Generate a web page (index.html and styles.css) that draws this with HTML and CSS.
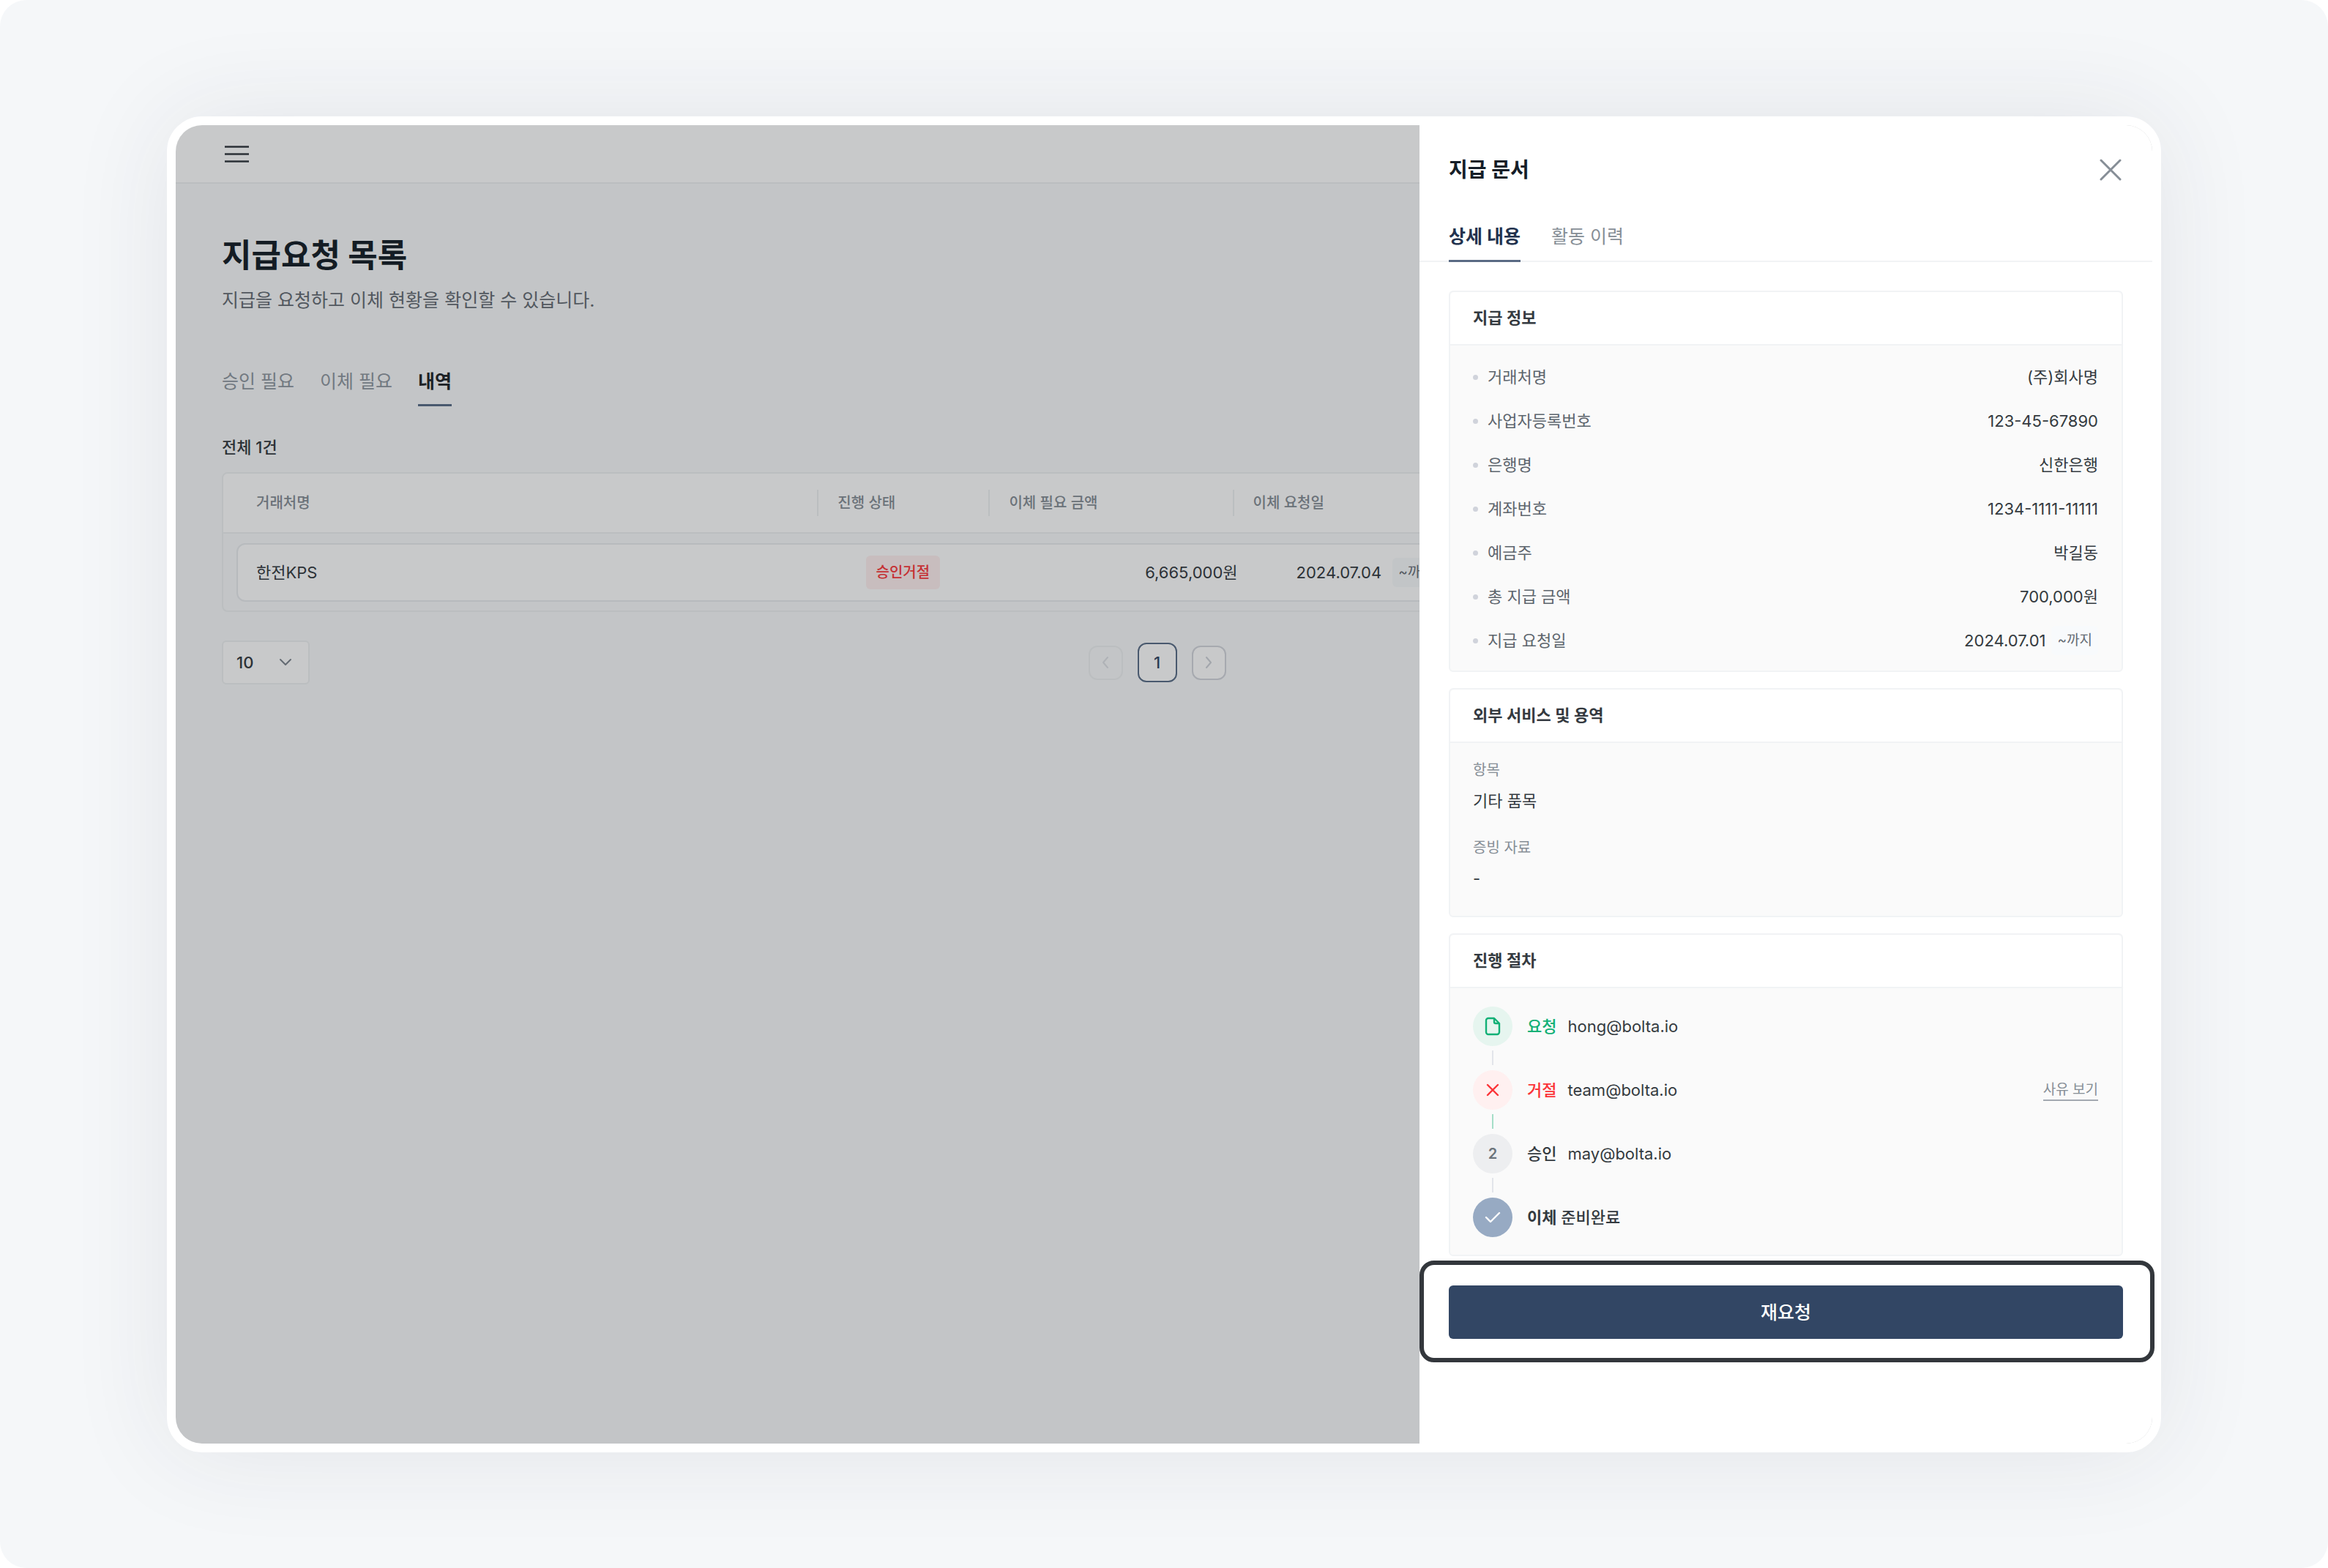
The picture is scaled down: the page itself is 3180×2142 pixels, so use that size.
FILE: index.html
```html
<!DOCTYPE html>
<html lang="ko">
<head>
    <meta charset="UTF-8">
    <meta name="viewport" content="width=device-width, initial-scale=1.0">
    <title>지급요청 목록</title>
    <link rel="stylesheet" href="styles.css">
</head>
<body>
    <div class="stage">
        <div class="window">
            <div class="app">
                <header class="topbar">
                    <button class="icon-button" type="button" aria-label="메뉴">
                        <svg width="33" height="24" viewBox="0 0 33 24" fill="none" stroke="#343a40" stroke-width="2.6">
                            <path d="M0 2.5h33M0 12.5h33M0 22.5h33"/>
                        </svg>
                    </button>
                </header>

                <main class="content">
                    <h1 class="page-title">지급요청 목록</h1>
                    <p class="page-desc">지급을 요청하고 이체 현황을 확인할 수 있습니다.</p>

                    <nav class="tabs">
                        <a class="tab" href="#approve">승인 필요</a>
                        <a class="tab" href="#transfer">이체 필요</a>
                        <a class="tab active" href="#history">내역</a>
                    </nav>

                    <p class="count">전체 1건</p>

                    <table class="list">
                        <thead>
                            <tr>
                                <th>거래처명</th>
                                <th>진행 상태</th>
                                <th>이체 필요 금액</th>
                                <th>이체 요청일</th>
                            </tr>
                        </thead>
                        <tbody>
                            <tr>
                                <td>한전KPS</td>
                                <td class="cell-status"><span class="badge-reject">승인거절</span></td>
                                <td class="cell-amount">6,665,000원</td>
                                <td class="cell-date">2024.07.04 <span class="until">~까지</span></td>
                            </tr>
                        </tbody>
                    </table>

                    <div class="list-footer">
                        <div class="page-size">
                            <select class="page-size-select" aria-label="페이지당 개수">
                                <option>10</option>
                            </select>
                            <svg class="page-size-arrow" width="18" height="12" viewBox="0 0 18 12" fill="none" stroke="#7d858e" stroke-width="2" stroke-linecap="round" stroke-linejoin="round">
                                <path d="M2 2l7 7 7-7"/>
                            </svg>
                        </div>
                        <div class="pagination">
                            <button class="page-arrow disabled" type="button" aria-label="이전" disabled>
                                <svg width="12" height="18" viewBox="0 0 12 18" fill="none" stroke="currentColor" stroke-width="2" stroke-linecap="round" stroke-linejoin="round">
                                    <path d="M9 2L3 9l6 7"/>
                                </svg>
                            </button>
                            <button class="page-number" type="button">1</button>
                            <button class="page-arrow" type="button" aria-label="다음">
                                <svg width="12" height="18" viewBox="0 0 12 18" fill="none" stroke="currentColor" stroke-width="2" stroke-linecap="round" stroke-linejoin="round">
                                    <path d="M3 2l6 7-6 7"/>
                                </svg>
                            </button>
                        </div>
                    </div>
                </main>
            </div>

            <div class="dim"></div>

            <aside class="drawer">
                <div class="drawer-header">
                    <h2 class="drawer-title">지급 문서</h2>
                    <button class="icon-button" type="button" aria-label="닫기">
                        <svg width="32" height="32" viewBox="0 0 32 32" fill="none" stroke="#868e96" stroke-width="3" stroke-linecap="round">
                            <path d="M2 3l26 26M28 3L2 29"/>
                        </svg>
                    </button>
                </div>

                <nav class="drawer-tabs">
                    <a class="drawer-tab active" href="#detail">상세 내용</a>
                    <a class="drawer-tab" href="#activity">활동 이력</a>
                </nav>

                <div class="drawer-body">
                    <section class="card">
                        <h3 class="card-title">지급 정보</h3>
                        <dl class="info">
                            <div class="info-row"><dt>거래처명</dt><dd>(주)회사명</dd></div>
                            <div class="info-row"><dt>사업자등록번호</dt><dd>123-45-67890</dd></div>
                            <div class="info-row"><dt>은행명</dt><dd>신한은행</dd></div>
                            <div class="info-row"><dt>계좌번호</dt><dd>1234-1111-11111</dd></div>
                            <div class="info-row"><dt>예금주</dt><dd>박길동</dd></div>
                            <div class="info-row"><dt>총 지급 금액</dt><dd>700,000원</dd></div>
                            <div class="info-row"><dt>지급 요청일</dt><dd>2024.07.01 <span class="until">~까지</span></dd></div>
                        </dl>
                    </section>

                    <section class="card">
                        <h3 class="card-title">외부 서비스 및 용역</h3>
                        <dl class="items">
                            <div class="item"><dt>항목</dt><dd>기타 품목</dd></div>
                            <div class="item"><dt>증빙 자료</dt><dd>-</dd></div>
                        </dl>
                    </section>

                    <section class="card">
                        <h3 class="card-title">진행 절차</h3>
                        <ol class="steps">
                            <li class="step">
                                <span class="step-icon green">
                                    <svg width="22" height="26" viewBox="0 0 22 26" fill="none" stroke="#12b076" stroke-width="2.4" stroke-linejoin="round">
                                        <path d="M5 2h8l7 7v12a3 3 0 0 1-3 3H5a3 3 0 0 1-3-3V5a3 3 0 0 1 3-3z"/>
                                        <path d="M13 2v5a2 2 0 0 0 2 2h5"/>
                                    </svg>
                                </span>
                                <span class="step-label green">요청</span>
                                <span class="step-user">hong@bolta.io</span>
                            </li>
                            <li class="step-line"></li>
                            <li class="step">
                                <span class="step-icon red">
                                    <svg width="20" height="20" viewBox="0 0 20 20" fill="none" stroke="#fb3438" stroke-width="2.4" stroke-linecap="round">
                                        <path d="M3 3l14 14M17 3L3 17"/>
                                    </svg>
                                </span>
                                <span class="step-label red">거절</span>
                                <span class="step-user">team@bolta.io</span>
                                <a class="step-reason" href="#reason">사유 보기</a>
                            </li>
                            <li class="step-line passed"></li>
                            <li class="step">
                                <span class="step-icon">2</span>
                                <span class="step-label">승인</span>
                                <span class="step-user">may@bolta.io</span>
                            </li>
                            <li class="step-line"></li>
                            <li class="step">
                                <span class="step-icon blue">
                                    <svg width="22" height="18" viewBox="0 0 22 18" fill="none" stroke="#fff" stroke-width="2.4" stroke-linecap="round" stroke-linejoin="round">
                                        <path d="M2 9l6 6L20 3"/>
                                    </svg>
                                </span>
                                <span class="step-label"><strong>이체</strong> 준비완료</span>
                            </li>
                        </ol>
                    </section>
                </div>

                <div class="drawer-footer">
                    <button class="submit" type="button">재요청</button>
                </div>
            </aside>
        </div>
    </div>
</body>
</html>
```
FILE: styles.css
```css
* {
    box-sizing: border-box;
    margin: 0;
    padding: 0;
}
body {
    background-color: #fff;
    color: #343a40;
    font-family: Inter, "Noto Sans CJK KR", sans-serif;
    font-size: 22px;
    line-height: 30px;
}
button, select {
    font: inherit;
    color: inherit;
    cursor: pointer;
}
a {
    color: inherit;
    text-decoration: none;
}
ol, ul {
    list-style: none;
}
svg {
    display: block;
}

.stage {
    display: flex;
    min-height: 100vh;
    padding: 159px 228px 158px;
    background-color: #f5f7f9;
    border-radius: 36px;
}
/* main screen, dim layer and drawer share one grid cell */
.window {
    flex: 1;
    display: grid;
    grid-template-columns: minmax(0, 1fr);
    border: 12px solid #fff;
    border-radius: 48px;
    background-color: #fff;
    box-shadow: 0 0 140px rgba(40, 45, 70, 0.09);
}
.app, .dim, .drawer {
    grid-area: 1 / 1;
}
.dim {
    z-index: 1;
    background-color: rgba(17, 22, 26, 0.23);
    border-radius: 36px;
}
.icon-button {
    display: flex;
    border: none;
    background: none;
}

/* list screen */
.app {
    background-color: #f9fafb;
    border-radius: 36px;
    overflow: hidden;
}
.topbar {
    display: flex;
    align-items: center;
    height: 80px;
    padding: 0 67px;
    background-color: #fff;
    border-bottom: 2px solid #eef1f2;
}
.content {
    padding: 66px 82px 0 63px;
}
.page-title {
    font-size: 44px;
    line-height: 64px;
    font-weight: 700;
    color: #151e28;
}
.page-desc {
    margin-top: 13px;
    font-size: 25px;
    line-height: 32px;
    color: #666c74;
}
.tabs {
    display: flex;
    gap: 35px;
    margin-top: 77px;
}
.tab {
    padding-bottom: 13px;
    border-bottom: 3px solid transparent;
    font-size: 25px;
    line-height: 36px;
    color: #8f98a1;
}
.tab.active {
    border-color: #5a6e88;
    color: #212529;
    font-weight: 700;
}
.count {
    margin-top: 41px;
    font-weight: 500;
}
.list {
    display: block;
    margin-top: 19px;
    border: 2px solid #eef1f2;
    border-radius: 8px;
}
.list thead, .list tbody {
    display: block;
}
.list thead {
    background-color: #fff;
    border-bottom: 2px solid #eef1f2;
    border-radius: 6px 6px 0 0;
}
.list tbody {
    padding: 13px 18px 12px;
}
.list tr {
    display: grid;
    align-items: center;
    height: 80px;
}
.list thead tr {
    grid-template-columns: 811fr 234fr 333fr 1172fr;
}
.list tbody tr {
    grid-template-columns: 791fr 234fr 366fr 1119fr;
    background-color: #fff;
    border: 2px solid #e9ecef;
    border-radius: 12px;
}
.list th {
    padding-left: 26px;
    border-left: 2px solid #eef1f2;
    font-size: 20px;
    line-height: 36px;
    font-weight: 500;
    text-align: left;
    color: #868e96;
}
.list th:first-child {
    padding-left: 45px;
    border-left: none;
}
.list td {
    padding-left: 25px;
}
.list .cell-status {
    padding-left: 0;
    text-align: center;
}
.list .cell-amount {
    padding-right: 26px;
    text-align: right;
}
.list .cell-date {
    display: flex;
    align-items: center;
    gap: 15px;
    padding-left: 54px;
}
.badge-reject {
    display: inline-block;
    padding: 8px 14px;
    border-radius: 6px;
    background-color: #fff0f0;
    font-size: 20px;
    font-weight: 500;
    color: #fb3a3d;
}
.until {
    padding: 5px 8px;
    border-radius: 6px;
    background-color: #f8fafc;
    font-size: 19px;
    color: #666c74;
}
.list-footer {
    display: grid;
    grid-template-columns: 1fr auto 1fr;
    align-items: center;
    margin-top: 39px;
}
.page-size {
    position: relative;
    justify-self: start;
}
.page-size-select {
    width: 120px;
    height: 60px;
    padding: 0 18px;
    border: 2px solid #eef1f2;
    border-radius: 6px;
    background-color: #fff;
    font-weight: 500;
    appearance: none;
}
.page-size-arrow {
    position: absolute;
    top: 24px;
    right: 24px;
    pointer-events: none;
}
.pagination {
    display: flex;
    align-items: center;
    gap: 20px;
}
.page-arrow, .page-number {
    display: flex;
    align-items: center;
    justify-content: center;
    border-radius: 12px;
    background-color: #fff;
}
.page-arrow {
    width: 47px;
    height: 47px;
    border: 2px solid #d3d6dc;
    color: #ced2d8;
}
.page-arrow.disabled {
    border-color: #eef1f2;
    background: none;
    color: #dfe2e6;
}
.page-number {
    width: 54px;
    height: 54px;
    border: 2px solid #5a6e88;
    font-weight: 500;
    color: #324664;
}

/* drawer */
.drawer {
    z-index: 2;
    justify-self: end;
    width: 1001px;
    background-color: #fff;
    border-radius: 0 36px 36px 0;
}
.drawer-header {
    display: flex;
    align-items: center;
    justify-content: space-between;
    padding: 40px 40px 0;
}
.drawer-title {
    font-size: 28px;
    line-height: 42px;
    font-weight: 700;
    color: #151e28;
}
.drawer-tabs {
    display: flex;
    gap: 42px;
    margin-top: 52px;
    padding: 0 40px;
    border-bottom: 2px solid #f1f3f5;
}
.drawer-tab {
    margin-bottom: -2px;
    padding-bottom: 14px;
    border-bottom: 3px solid transparent;
    font-size: 25px;
    line-height: 36px;
    color: #868e96;
}
.drawer-tab.active {
    border-color: #5a6a84;
    color: #22324e;
    font-weight: 700;
}
.drawer-body {
    display: flex;
    flex-direction: column;
    gap: 22px;
    padding: 39px 40px 6px;
}
.card {
    border: 2px solid #f1f3f5;
    border-radius: 6px;
    background-color: #fafafa;
}
.card-title {
    padding: 20px 31px 21px;
    border-bottom: 2px solid #f1f3f5;
    border-radius: 6px 6px 0 0;
    background-color: #fff;
    font-size: 22px;
    font-weight: 600;
    color: #343a40;
}
.info {
    display: flex;
    flex-direction: column;
    gap: 30px;
    padding: 28px 32px 26px 31px;
}
.info-row {
    display: flex;
    align-items: center;
    justify-content: space-between;
    height: 30px;
}
.info-row dt {
    display: flex;
    align-items: center;
    gap: 13px;
    color: #5d656d;
}
.info-row dt::before {
    content: "";
    width: 7px;
    height: 7px;
    border-radius: 50%;
    background-color: #d0d3db;
}
.info-row dd {
    display: flex;
    align-items: center;
    gap: 8px;
}
.items {
    display: flex;
    flex-direction: column;
    gap: 34px;
    padding: 22px 31px 36px;
}
.item dt {
    margin-bottom: 12px;
    font-size: 20px;
    color: #868e96;
}
.steps {
    padding: 25px 32px 24px 31px;
}
.step {
    display: flex;
    align-items: center;
}
.step-icon {
    display: flex;
    align-items: center;
    justify-content: center;
    width: 54px;
    height: 54px;
    margin-right: 20px;
    border-radius: 50%;
    background-color: #edeef0;
    font-size: 20px;
    font-weight: 600;
    color: #6c747b;
}
.step-icon.green {
    background-color: #e6f5ef;
}
.step-icon.red {
    background-color: #fff0f0;
}
.step-icon.blue {
    background-color: #97aac3;
}
.step-label {
    font-weight: 500;
}
.step-label.green {
    color: #12b076;
}
.step-label.red {
    color: #fb3438;
}
.step-label strong {
    font-weight: 600;
}
.step-user {
    margin-left: 15px;
}
.step-reason {
    margin-left: auto;
    border-bottom: 2px solid #a3a9b1;
    font-size: 19px;
    line-height: 27px;
    color: #868e96;
}
.step-line {
    width: 2px;
    height: 20px;
    margin: 6px 26px 7px;
    background-color: #e2e5ea;
}
.step-line.passed {
    background-color: #a5dec8;
}
.drawer-footer {
    margin-right: -3px;
    padding: 28px 37px 26px 34px;
    border: 6px solid #33373c;
    border-radius: 20px;
}
.submit {
    display: block;
    width: 100%;
    height: 73px;
    border: none;
    border-radius: 6px;
    background-color: #324664;
    font-size: 25px;
    font-weight: 500;
    color: #fff;
}
```
